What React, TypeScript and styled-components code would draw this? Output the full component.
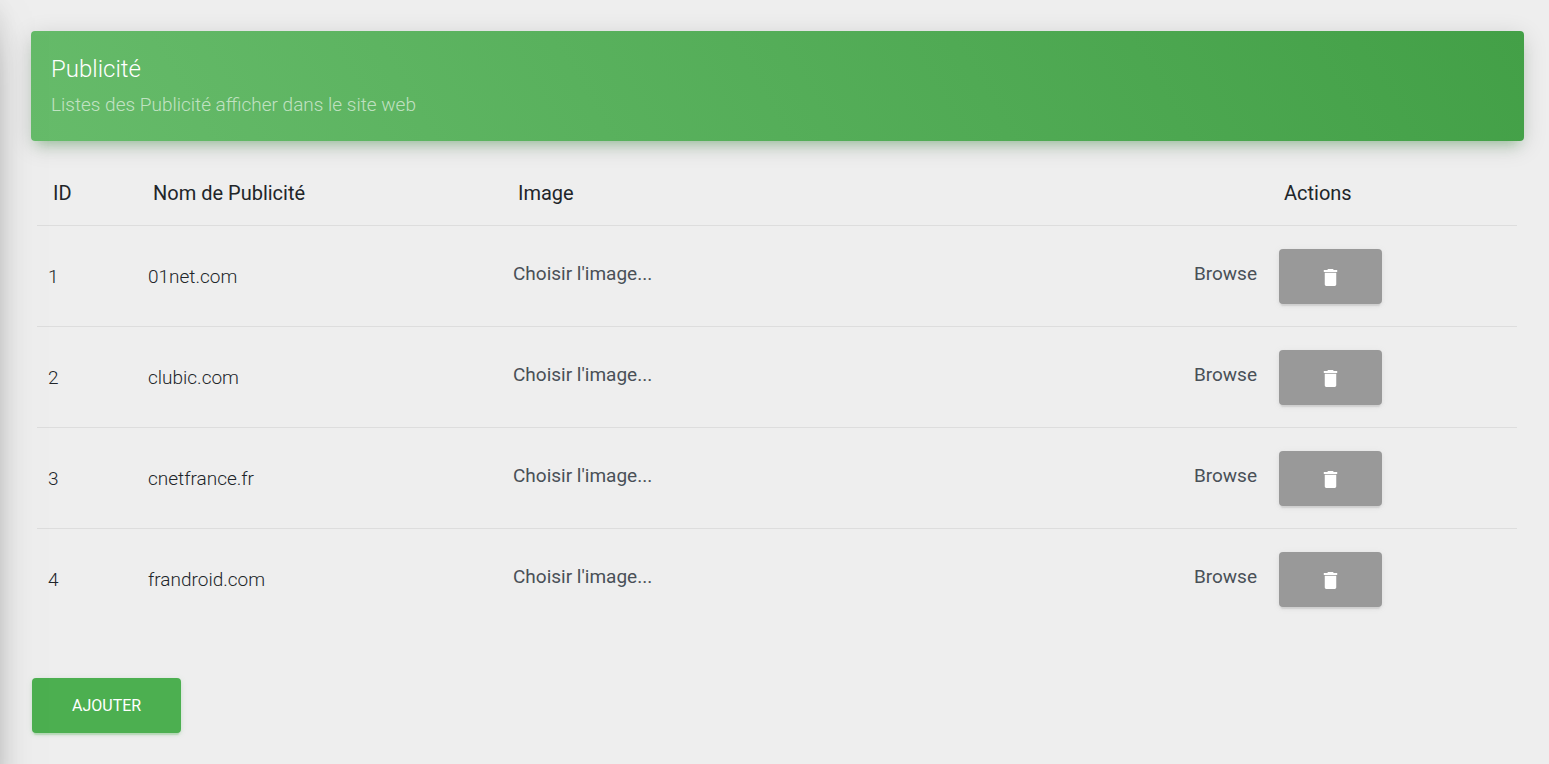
import React from 'react';
import styled, { createGlobalStyle } from 'styled-components';

const GlobalStyle = createGlobalStyle`
  *, *::before, *::after { box-sizing: border-box; }
  body {
    margin: 0;
    background: #eeeeee;
    color: #212529;
    font-family: Roboto, "Liberation Sans", sans-serif;
    font-size: 19px;
    font-weight: 300;
    line-height: 29px;
    overflow-x: hidden;
  }
`;

/* Closed side drawer: it waits outside the left edge and only its shadow shows. */
const Drawer = styled.div`
  position: fixed;
  top: 0;
  bottom: -40px;
  left: -328px;
  width: 320px;
  pointer-events: none;
  box-shadow:
    0 20px 48px -15px rgba(0, 0, 0, 0.56),
    0 5px 31px 0 rgba(0, 0, 0, 0.12),
    0 10px 12px -6px rgba(0, 0, 0, 0.2);
`;

const Page = styled.main`
  padding: 31px 25px 31px 31px;
`;

const Banner = styled.header`
  padding: 24px 20px 22px;
  border-radius: 4px;
  background: linear-gradient(60deg, #66bb6a, #43a047);
  box-shadow:
    0 5px 25px 0 rgba(0, 0, 0, 0.14),
    0 9px 12px -6px rgba(76, 175, 80, 0.4);
  color: #ffffff;
`;

const Title = styled.h4`
  margin: 0 0 8px;
  font-size: 24px;
  font-weight: 300;
  line-height: 28px;
`;

const Subtitle = styled.p`
  margin: 0;
  color: rgba(255, 255, 255, 0.62);
  font-size: 19px;
  line-height: 28px;
`;

const TableArea = styled.section`
  padding: 20px 7px 0 6px;
`;

const Table = styled.table`
  width: 100%;
  table-layout: fixed;
  border-collapse: collapse;
`;

const HeadCell = styled.th<{ $width?: number }>`
  width: ${({ $width }) => ($width ? `${$width}px` : 'auto')};
  height: 64px;
  padding: 0 16px;
  font-size: 20px;
  font-weight: 400;
  line-height: 28px;
  text-align: left;
`;

const Cell = styled.td`
  height: 101px;
  padding: 1px 11px 0;
  border-top: 1px solid #dddddd;
  vertical-align: middle;
`;

const FilePicker = styled.label`
  position: relative;
  display: flex;
  justify-content: space-between;
  padding-bottom: 6px;
  color: #495057;
  font-weight: 400;
  cursor: pointer;
`;

const FileInput = styled.input`
  position: absolute;
  inset: 0;
  width: 100%;
  height: 100%;
  opacity: 0;
  cursor: pointer;
`;

const Button = styled.button<{ $tone: 'neutral' | 'success' }>`
  display: inline-flex;
  align-items: center;
  justify-content: center;
  height: 55px;
  padding: 0 40px;
  border: 0;
  border-radius: 4px;
  background: ${({ $tone }) => ($tone === 'success' ? '#4caf50' : '#999999')};
  box-shadow: ${({ $tone }) => {
    const rgb = $tone === 'success' ? '76, 175, 80' : '153, 153, 153';
    return `0 2px 3px 0 rgba(${rgb}, 0.14), 0 4px 1px -2px rgba(${rgb}, 0.2), 0 1px 6px 0 rgba(${rgb}, 0.12)`;
  }};
  color: #ffffff;
  font-family: inherit;
  font-size: 16px;
  font-weight: 400;
  text-transform: uppercase;
  vertical-align: middle;
  cursor: pointer;
`;

const Footer = styled.footer`
  padding: 49px 1px 0;
`;

const TrashIcon = () => (
  <svg width="23" height="23" viewBox="0 0 24 24" fill="currentColor" aria-hidden="true">
    <path d="M6 20c0 1.100.9 2 2 2h8c1.100 0 2-.9 2-2V8.200H6V20zM19 5.200h-3.500l-1-1h-5l-1 1H5v2h14v-2z" />
  </svg>
);

const ads = [
  { id: 1, name: '01net.com' },
  { id: 2, name: 'clubic.com' },
  { id: 3, name: 'cnetfrance.fr' },
  { id: 4, name: 'frandroid.com' },
];

export default function App() {
  return (
    <>
      <GlobalStyle />
      <Page>
        <Banner>
          <Title>Publicité</Title>
          <Subtitle>Listes des Publicité afficher dans le site web</Subtitle>
        </Banner>
        <TableArea>
          <Table>
            <thead>
              <tr>
                <HeadCell $width={100}>ID</HeadCell>
                <HeadCell $width={365}>Nom de Publicité</HeadCell>
                <HeadCell>Image</HeadCell>
                <HeadCell $width={249}>Actions</HeadCell>
              </tr>
            </thead>
            <tbody>
              {ads.map((ad) => (
                <tr key={ad.id}>
                  <Cell>{ad.id}</Cell>
                  <Cell>{ad.name}</Cell>
                  <Cell>
                    <FilePicker htmlFor={`image-${ad.id}`}>
                      <span>Choisir l'image...</span>
                      <span>Browse</span>
                      <FileInput id={`image-${ad.id}`} type="file" accept="image/*" />
                    </FilePicker>
                  </Cell>
                  <Cell>
                    <Button type="button" $tone="neutral" aria-label={`Supprimer ${ad.name}`}>
                      <TrashIcon />
                    </Button>
                  </Cell>
                </tr>
              ))}
            </tbody>
          </Table>
        </TableArea>
        <Footer>
          <Button type="button" $tone="success">Ajouter</Button>
        </Footer>
      </Page>
      <Drawer aria-hidden="true" />
    </>
  );
}
